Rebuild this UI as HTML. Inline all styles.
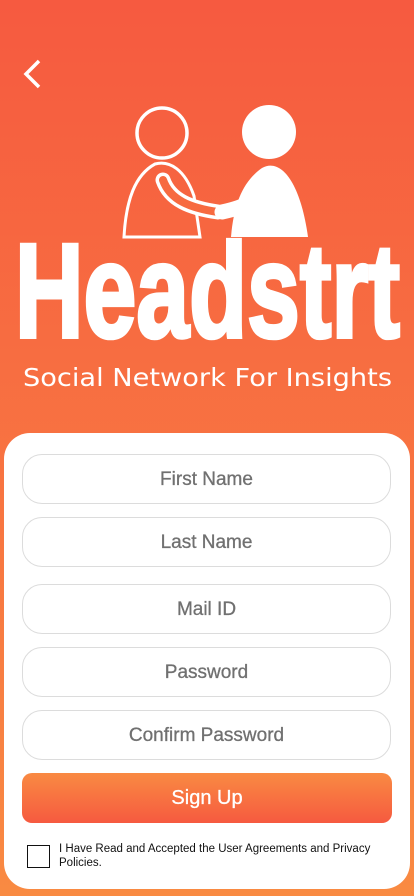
<!DOCTYPE html>
<html><head><meta charset="utf-8"><style>
*{margin:0;padding:0;box-sizing:border-box}
body{width:414px;height:896px;overflow:hidden;background:linear-gradient(#f65a40,#f98a42);font-family:"Liberation Sans",sans-serif;position:relative}
.card{position:absolute;left:4px;top:433px;width:406px;height:456px;background:#fff;border-radius:26px}
.in{position:absolute;left:22px;width:369px;height:50px;border:1px solid #dcdcdc;border-radius:20px;color:#707070;font-size:19px;text-align:center;line-height:50px;-webkit-text-stroke:0.3px #707070}
.btn{position:absolute;left:22px;top:773px;width:370px;height:50px;border-radius:10px;background:linear-gradient(#f98a42,#f65a40);color:#fff;font-size:20px;text-align:center;line-height:50px;-webkit-text-stroke:0.3px #fff}
.cb{position:absolute;left:27px;top:845px;width:23px;height:23px;border:1.5px solid #111}
.t{position:absolute;left:59px;top:842px;width:340px;font-size:11.5px;line-height:14px;color:#111}
</style></head><body>
<svg style="position:absolute;left:0;top:0" width="414" height="400">
<polyline points="39,61 26,74 39,87" fill="none" stroke="#fff" stroke-width="3.5"/>
<circle cx="162" cy="133" r="25" fill="none" stroke="#fff" stroke-width="3.5"/>
<path d="M124,237 C126,200 135,175 155,164 C170,160 185,170 194,196 L200,237 Z" fill="none" stroke="#fff" stroke-width="3"/>
<circle cx="269" cy="132" r="27" fill="#fff"/>
<path d="M231,237 C234,200 245,180 262,168 C280,158 300,180 308,237 Z" fill="#fff"/>
<path d="M163,180 C170,200 190,208 218,212" fill="none" stroke="#fff" stroke-width="15" stroke-linecap="round"/>
<path d="M163,180 C170,200 190,208 218,212" fill="none" stroke="#f76a40" stroke-width="8" stroke-linecap="round"/>
<path d="M268,180 C262,200 245,207 222,212" fill="none" stroke="#fff" stroke-width="15" stroke-linecap="round"/>
<path d="M268,180 C262,200 245,207 222,212" fill="#fff" stroke="#f76a40" stroke-width="1" stroke-opacity="0"/>
<text x="15" y="337" textLength="385" lengthAdjust="spacingAndGlyphs" font-family="Liberation Sans,sans-serif" font-weight="bold" font-size="134" fill="#fff" stroke="#fff" stroke-width="4">Headstrt</text>
<text x="23" y="386" textLength="369" lengthAdjust="spacingAndGlyphs" font-family="DejaVu Sans,sans-serif" font-size="25" fill="#fff">Social Network For Insights</text>
</svg>
<div class="card"></div>
<div class="in" style="top:454px">First Name</div>
<div class="in" style="top:517px">Last Name</div>
<div class="in" style="top:584px">Mail ID</div>
<div class="in" style="top:647px">Password</div>
<div class="in" style="top:710px">Confirm Password</div>
<div class="btn">Sign Up</div>
<div class="cb"></div>
<div class="t">I Have Read and Accepted the User Agreements and Privacy Policies.</div>
</body></html>
